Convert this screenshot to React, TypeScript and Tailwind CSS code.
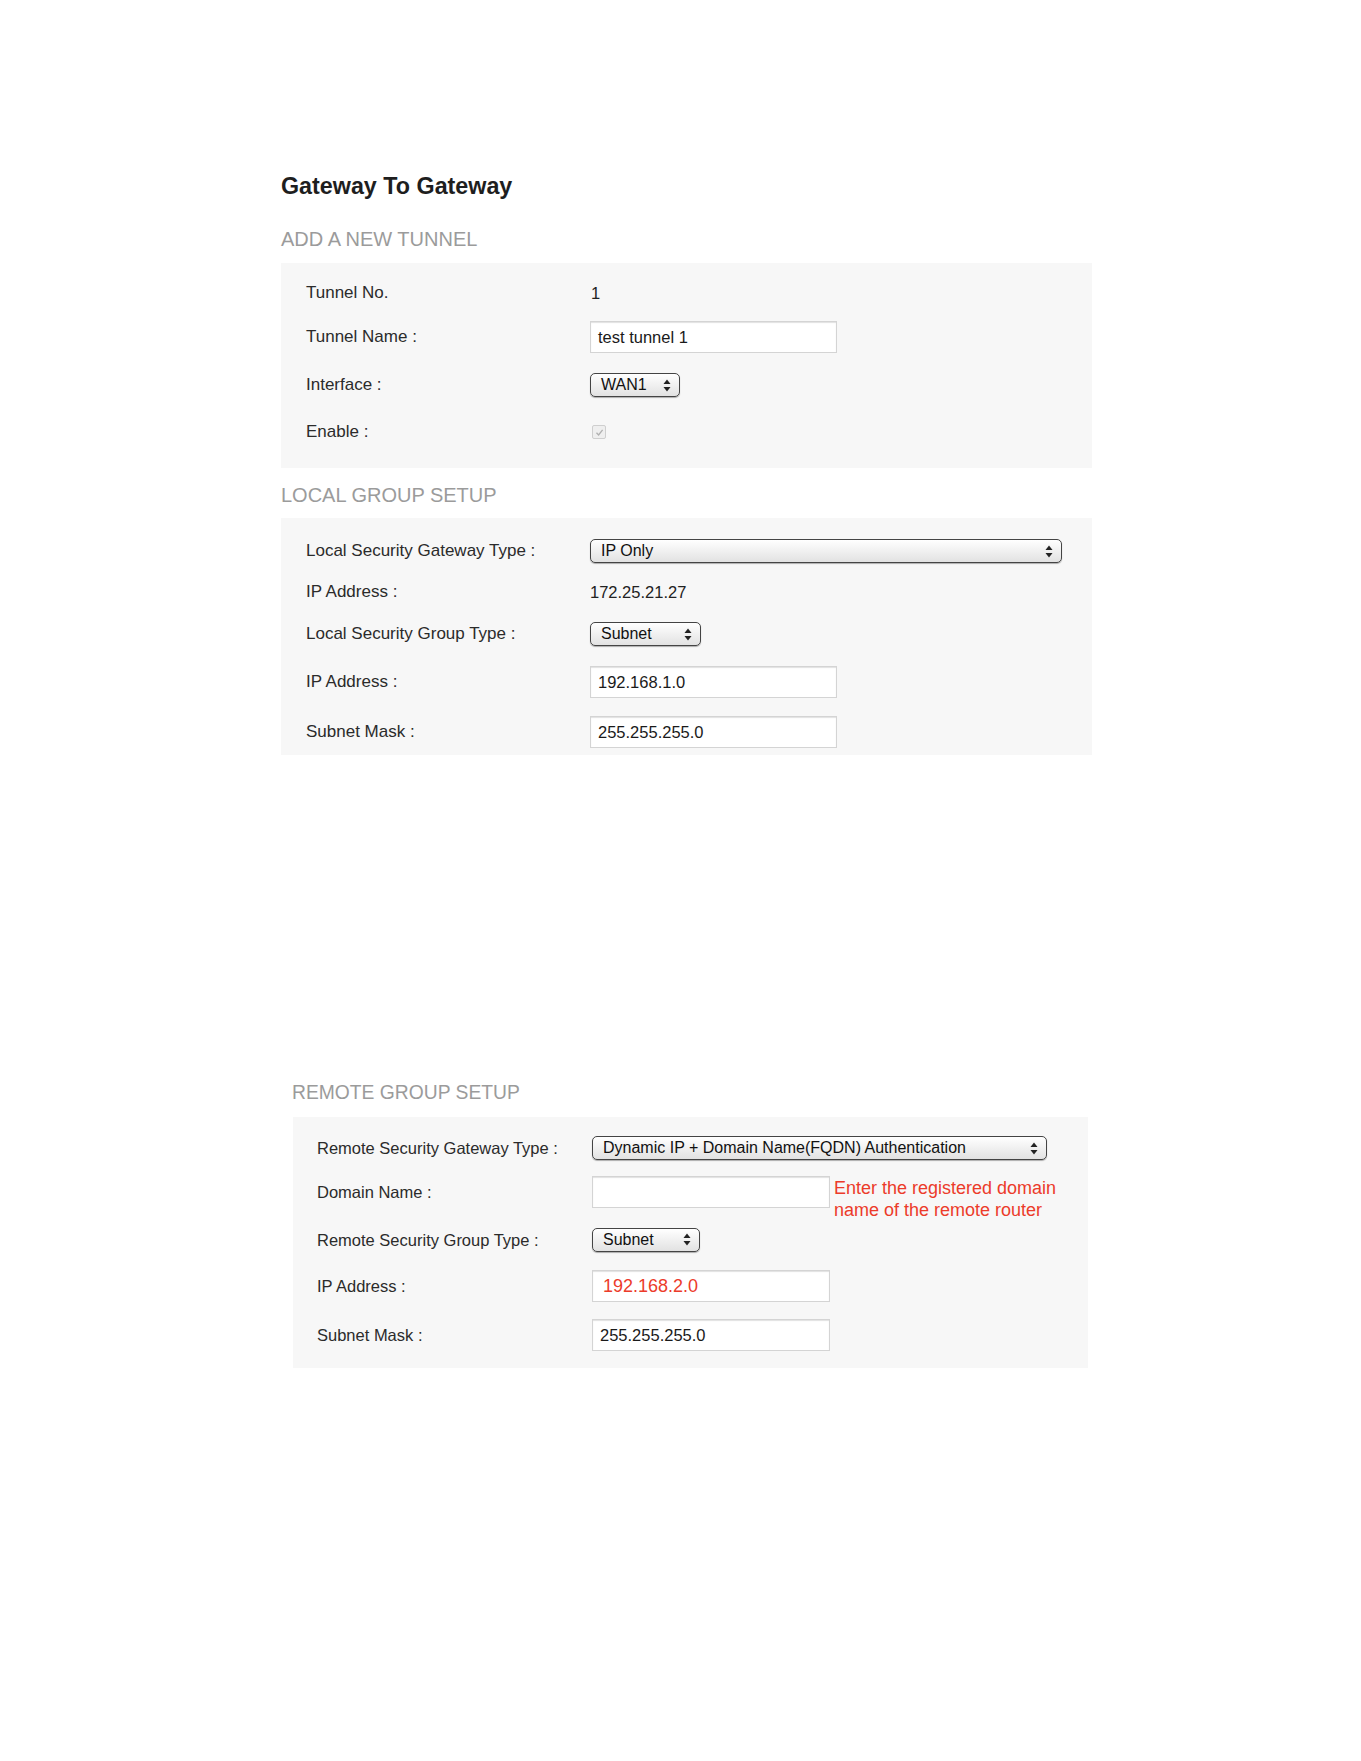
import type { ReactNode } from 'react'

const font = { fontFamily: '"Liberation Sans", Helvetica, Arial, sans-serif' }

const Arrows = () => (
  <svg width="8" height="13" viewBox="0 0 8 13" className="shrink-0">
    <path d="M4 0.5 L7.5 5 L0.5 5 Z" fill="#222" />
    <path d="M4 12.5 L7.5 8 L0.5 8 Z" fill="#222" />
  </svg>
)

const Select = ({ value, width }: { value: string; width: string }) => (
  <div
    className={`${width} h-[24px] flex items-center justify-between pl-[10px] pr-[8px] rounded-[5px] border-[1.5px] border-[#444] bg-linear-to-b from-white to-[#e2e2e2] text-[16px] text-[#111] shadow-[0_1px_1px_rgba(0,0,0,0.3)]`}
  >
    <span className="leading-none">{value}</span>
    <Arrows />
  </div>
)

const Input = ({ value, width, red }: { value?: string; width: string; red?: boolean }) => (
  <div
    className={`${width} h-[32px] flex items-center bg-white border border-[#d4d4d4] shadow-[inset_0_1px_1px_rgba(0,0,0,0.12)] ${
      red ? 'pl-[10px] text-[18px] text-[#ec3b2a]' : 'pl-[7px] text-[16.5px] text-[#1a1a1a]'
    }`}
  >
    {value}
  </div>
)

const Row = ({
  h,
  label,
  labelW,
  size = 'text-[17px]',
  children,
}: {
  h: string
  label: string
  labelW: string
  size?: string
  children: ReactNode
}) => (
  <div className={`flex items-center ${h}`}>
    <div className={`${labelW} ${size} shrink-0 text-[#2b2b2b] leading-[20px]`}>{label}</div>
    <div className="flex items-center">{children}</div>
  </div>
)

const Heading = ({ children, size = 'text-[20px]' }: { children: ReactNode; size?: string }) => (
  <h3 className={`${size} leading-[24px] text-[#9b9b9b]`}>{children}</h3>
)

export default function App() {
  return (
    <div className="w-full min-h-[1761px] bg-white" style={font}>
      {/* first capture */}
      <div className="pl-[281px] pt-[172px]">
        <h1 className="text-[23.3px] leading-[28px] font-bold text-[#1e1e1e]">Gateway To Gateway</h1>

        <div className="mt-[27px]">
          <Heading>ADD A NEW TUNNEL</Heading>
        </div>
        <div className="mt-[12px] w-[811px] bg-[#f7f7f7] pl-[25px] pt-[12px] pb-[11px]">
          <Row h="h-[36px]" label="Tunnel No." labelW="w-[284px]">
            <span className="text-[16.5px] text-[#222] pl-[1px]">1</span>
          </Row>
          <Row h="h-[52px]" label="Tunnel Name :" labelW="w-[284px]">
            <Input value="test tunnel 1" width="w-[247px]" />
          </Row>
          <Row h="h-[44px]" label="Interface :" labelW="w-[284px]">
            <Select value="WAN1" width="w-[90px]" />
          </Row>
          <Row h="h-[50px]" label="Enable :" labelW="w-[284px]">
            <div className="ml-[2px] w-[14px] h-[14px] rounded-[2px] border border-[#cfcfcf] bg-[#efefef] flex items-center justify-center">
              <svg width="9" height="9" viewBox="0 0 9 9">
                <path d="M1.5 4.8 L3.6 7 L7.6 1.8" fill="none" stroke="#b0b0b0" strokeWidth="1.3" />
              </svg>
            </div>
          </Row>
        </div>

        <div className="mt-[15px]">
          <Heading>LOCAL GROUP SETUP</Heading>
        </div>
        <div className="mt-[11px] w-[811px] bg-[#f7f7f7] pl-[25px] pt-[14px] pb-[1px]">
          <Row h="h-[38px]" label="Local Security Gateway Type :" labelW="w-[284px]">
            <Select value="IP Only" width="w-[472px]" />
          </Row>
          <Row h="h-[44px]" label="IP Address :" labelW="w-[284px]">
            <span className="text-[16.5px] text-[#222]">172.25.21.27</span>
          </Row>
          <Row h="h-[40px]" label="Local Security Group Type :" labelW="w-[284px]">
            <Select value="Subnet" width="w-[111px]" />
          </Row>
          <Row h="h-[56px]" label="IP Address :" labelW="w-[284px]">
            <Input value="192.168.1.0" width="w-[247px]" />
          </Row>
          <Row h="h-[44px]" label="Subnet Mask :" labelW="w-[284px]">
            <Input value="255.255.255.0" width="w-[247px]" />
          </Row>
        </div>
      </div>

      {/* second capture */}
      <div className="pl-[292px] mt-[326px] pb-[393px]">
        <Heading size="text-[19.3px]">REMOTE GROUP SETUP</Heading>
        <div className="mt-[12px] ml-[1px] w-[795px] bg-[#f7f7f7] pl-[24px] pt-[10px] pb-[7px]">
          <Row h="h-[42px]" label="Remote Security Gateway Type :" labelW="w-[275px]" size="text-[16.5px]">
            <Select value="Dynamic IP + Domain Name(FQDN) Authentication" width="w-[455px]" />
          </Row>
          <div className="flex items-start h-[47px] pt-[7px]">
            <div className="w-[275px] shrink-0 text-[16.5px] text-[#2b2b2b] leading-[20px] mt-[6px]">Domain Name :</div>
            <Input width="w-[238px]" />
            <div className="ml-[4px] mt-[2px] text-[18px] leading-[21.5px] text-[#ec3b2a]">
              Enter the registered domain
              <br />
              name of the remote router
            </div>
          </div>
          <Row h="h-[47px]" label="Remote Security Group Type :" labelW="w-[275px]" size="text-[16.5px]">
            <Select value="Subnet" width="w-[108px]" />
          </Row>
          <Row h="h-[46px]" label="IP Address :" labelW="w-[275px]" size="text-[16.5px]">
            <Input value="192.168.2.0" width="w-[238px]" red />
          </Row>
          <Row h="h-[52px]" label="Subnet Mask :" labelW="w-[275px]" size="text-[16.5px]">
            <Input value="255.255.255.0" width="w-[238px]" />
          </Row>
        </div>
      </div>
    </div>
  )
}
